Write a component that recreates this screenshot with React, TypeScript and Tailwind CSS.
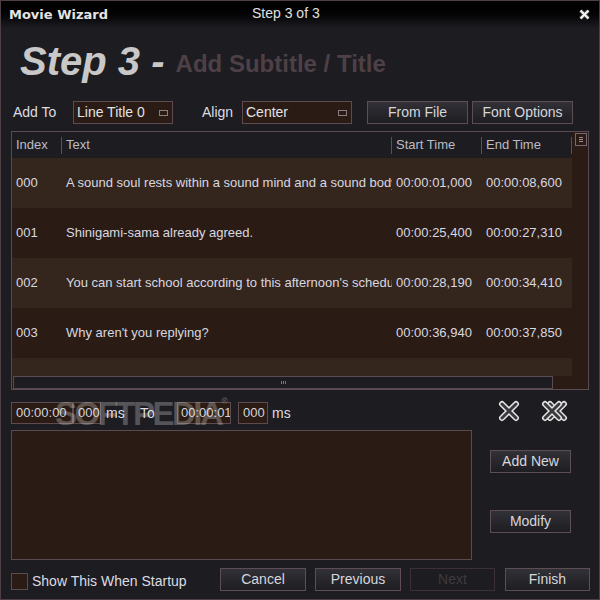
import type { ReactNode } from 'react'

const rows = [
  { index: '000', text: 'A sound soul rests within a sound mind and a sound body.', start: '00:00:01,000', end: '00:00:08,600' },
  { index: '001', text: 'Shinigami-sama already agreed.', start: '00:00:25,400', end: '00:00:27,310' },
  { index: '002', text: "You can start school according to this afternoon's schedule.", start: '00:00:28,190', end: '00:00:34,410' },
  { index: '003', text: "Why aren't you replying?", start: '00:00:36,940', end: '00:00:37,850' }
]

const Button = ({ children, className = '', disabled = false }: { children: ReactNode; className?: string; disabled?: boolean }) => (
  <button
    type="button"
    disabled={disabled}
    className={
      disabled
        ? `flex h-[23px] items-center justify-center border border-[#3a3035] bg-[#1d1c21] text-[14px] text-[#3d3b40] ${className}`
        : `flex h-[23px] items-center justify-center border border-[#5e4d54] bg-linear-to-b from-[#323137] to-[#1e1d22] text-[14px] text-[#d6d6dc] ${className}`
    }
  >
    {children}
  </button>
)

const Dropdown = ({ value, className = '' }: { value: string; className?: string }) => (
  <div className={`flex h-[23px] items-center justify-between border border-[#5e4b50] bg-[#2a1c14] pl-[3px] pr-[4px] text-[14px] text-[#e2e2e6] ${className}`}>
    <span>{value}</span>
    <span className="h-[6px] w-[9px] border border-[#8a7c82]" />
  </div>
)

const TimeBox = ({ value, className = '' }: { value: string; className?: string }) => (
  <div className={`flex h-[22px] items-center overflow-hidden whitespace-nowrap border border-[#5e4b50] bg-[#2a1c14] text-[13px] text-[#d4d4dc] ${className}`}>
    {value}
  </div>
)

const XIcon = ({ double = false }: { double?: boolean }) => (
  <svg width={double ? 27 : 22} height="22" viewBox={double ? '0 0 27 22' : '0 0 22 22'}>
    {(double ? [5, 0] : [0]).map((dx) => (
      <g key={dx} transform={`translate(${dx} 0)`}>
        <path d="M4 4 L18 18 M18 4 L4 18" stroke="#e6e6e6" strokeWidth="6" strokeLinecap="round" />
        <path d="M4 4 L18 18 M18 4 L4 18" stroke="#3a3a3e" strokeWidth="3" strokeLinecap="round" />
      </g>
    ))}
  </svg>
)

const Sep = () => <div className="h-[17px] w-px bg-[#5c5058]" />

export default function App() {
  return (
    <div className="relative flex h-[600px] w-[600px] flex-col overflow-hidden border border-[#4d3f45] bg-[#1d1c21] font-['Liberation_Sans',Arial,sans-serif] text-[#d6d6dc]">
      {/* title bar */}
      <div className="flex h-[27px] items-center bg-linear-to-b from-[#000000] to-[#1d1c21] pl-[8px] pr-[9px]">
        <span className="w-[243px] font-['DejaVu_Sans',Verdana,sans-serif] text-[13px] font-bold text-[#e4e4e4]">Movie Wizard</span>
        <span className="-mt-[2px] text-[14px] text-[#e0e0e0]">Step 3 of 3</span>
        <svg className="ml-auto" width="11" height="11" viewBox="0 0 11 11">
          <path d="M1.5 1.5 L9.5 9.5 M9.5 1.5 L1.5 9.5" stroke="#3a3a3a" strokeWidth="4" />
          <path d="M1.5 1.5 L9.5 9.5 M9.5 1.5 L1.5 9.5" stroke="#f2f2f2" strokeWidth="2.4" />
        </svg>
      </div>

      {/* heading */}
      <div className="flex h-[73px] items-baseline pl-[19px] pt-[13px] leading-none">
        <span className="text-[40px] font-bold italic text-[#c8c8c8]">Step 3 -&nbsp;</span>
        <span className="-translate-y-[3px] text-[24px] font-bold text-[#4d4046]">Add Subtitle / Title</span>
      </div>

      {/* options row */}
      <div className="flex h-[23px] items-center text-[14px]">
        <span className="w-[72px] pl-[12px] text-[#dcdce2]">Add To</span>
        <Dropdown value="Line Title 0" className="w-[100px]" />
        <span className="ml-[29px] w-[40px] text-[#dcdce2]">Align</span>
        <Dropdown value="Center" className="w-[110px]" />
        <Button className="ml-[15px] w-[101px]">From File</Button>
        <Button className="ml-[4px] w-[101px]">Font Options</Button>
      </div>

      {/* subtitle table */}
      <div className="ml-[10px] mt-[7px] flex h-[259px] w-[578px] border border-[#5a4b51]">
        <div className="flex w-[560px] flex-col">
          <div className="flex h-[26px] items-center text-[13px] text-[#bcbcc4]">
            <span className="w-[49px] pl-[4px]">Index</span>
            <Sep />
            <span className="w-[329px] pl-[4px]">Text</span>
            <Sep />
            <span className="w-[89px] pl-[4px]">Start Time</span>
            <Sep />
            <span className="w-[89px] pl-[4px]">End Time</span>
            <Sep />
          </div>
          <div className="flex h-[218px] flex-col overflow-hidden bg-[#2a1c14] text-[13px] text-[#d8d8e0]">
            {rows.map((row, i) => (
              <div key={row.index} className={`flex h-[50px] shrink-0 items-center ${i % 2 === 0 ? 'bg-[#35261d]' : 'bg-[#2a1c14]'}`}>
                <span className="w-[50px] pl-[4px]">{row.index}</span>
                <span className="w-[330px] overflow-hidden whitespace-nowrap pl-[4px]">{row.text}</span>
                <span className="w-[90px] pl-[4px]">{row.start}</span>
                <span className="w-[90px] pl-[4px]">{row.end}</span>
              </div>
            ))}
            <div className="h-[50px] shrink-0 bg-[#35261d]" />
          </div>
          <div className="flex h-[13px] bg-[#2a1c14] pl-[1px]">
            <div className="flex h-[13px] w-[540px] items-center justify-center gap-[1px] border border-[#5a4b51] bg-[#1d1c21]">
              <span className="h-[3px] w-px bg-[#77777c]" />
              <span className="h-[3px] w-px bg-[#77777c]" />
              <span className="h-[3px] w-px bg-[#77777c]" />
            </div>
          </div>
        </div>
        <div className="w-[16px] bg-[#2a1c14] pl-[3px] pt-[1px]">
          <div className="flex h-[13px] w-[12px] flex-col items-center justify-center gap-[1px] border border-[#76666d]">
            <span className="h-px w-[4px] bg-[#9a8c92]" />
            <span className="h-px w-[4px] bg-[#9a8c92]" />
            <span className="h-px w-[4px] bg-[#9a8c92]" />
          </div>
        </div>
      </div>

      {/* time row */}
      <div className="mt-[12px] flex h-[22px] items-center pl-[10px] pr-[31px] text-[14px]">
        <TimeBox value="00:00:00" className="w-[62px] pl-[4px]" />
        <TimeBox value="000" className="w-[28px] pl-[4px]" />
        <span className="ml-[5px] w-[29px] text-[#dcdce2]">ms</span>
        <span className="ml-[5px] w-[37px] text-[#dcdce2]">To</span>
        <TimeBox value="00:00:01" className="w-[54px] pl-[3px]" />
        <TimeBox value="000" className="ml-[7px] w-[30px] pl-[4px]" />
        <span className="ml-[4px] text-[#dcdce2]">ms</span>
        <div className="-mt-[5px] ml-auto flex items-center gap-[21px]">
          <XIcon />
          <XIcon double />
        </div>
      </div>

      {/* text editor */}
      <div className="mt-[6px] flex h-[130px] pl-[10px]">
        <div className="h-[130px] w-[461px] border border-[#5a4b51] bg-[#2a1c14]" />
        <div className="ml-[18px] flex flex-col gap-[37px] pt-[20px]">
          <Button className="w-[81px]">Add New</Button>
          <Button className="w-[81px]">Modify</Button>
        </div>
      </div>

      {/* footer */}
      <div className="mt-[8px] flex h-[23px] items-center pl-[10px] text-[14px]">
        <span className="mt-[4px] h-[17px] w-[17px] border border-[#5a4b51] bg-[#2a1c14]" />
        <span className="ml-[4px] mt-[3px] w-[188px] text-[#dcdce2]">Show This When Startup</span>
        <Button className="w-[86px]">Cancel</Button>
        <Button className="ml-[9px] w-[86px]">Previous</Button>
        <Button disabled className="ml-[9px] w-[85px]">Next</Button>
        <Button className="ml-[10px] w-[85px]">Finish</Button>
      </div>

      {/* watermark */}
      <div className="pointer-events-none absolute left-[54px] top-[396px] text-[33px] font-bold leading-none tracking-[-2.5px] text-white/25">
        SOFTPEDIA<span className="align-top text-[9px] tracking-normal">®</span>
      </div>
    </div>
  )
}
